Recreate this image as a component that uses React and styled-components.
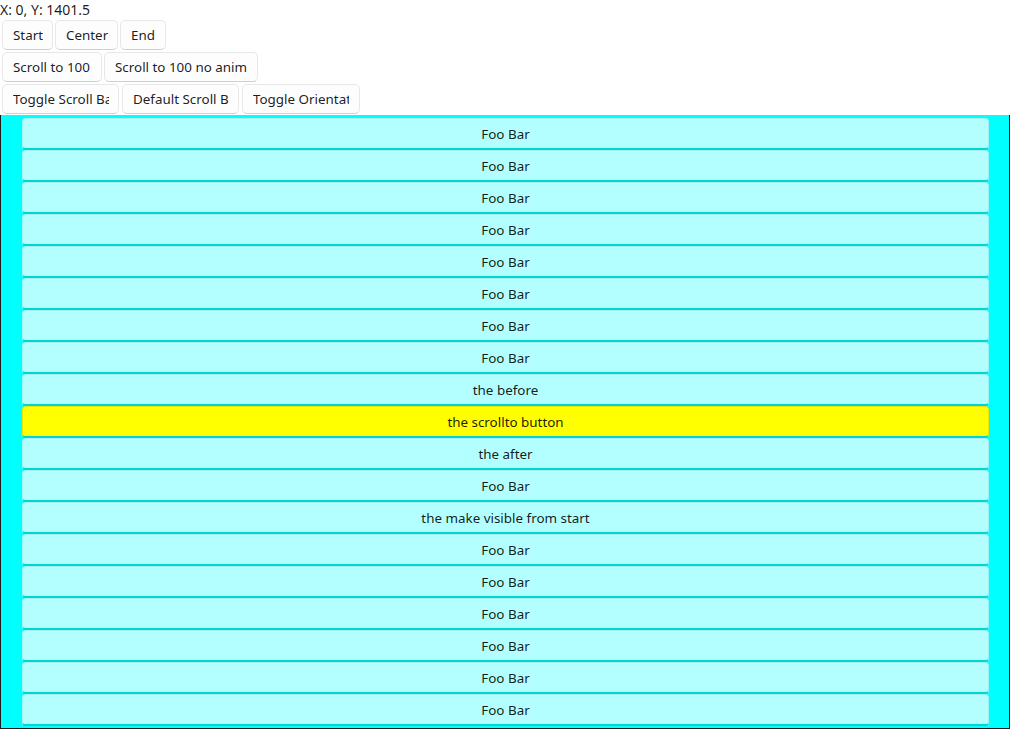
import React from "react";
import styled, { createGlobalStyle } from "styled-components";

const Global = createGlobalStyle`
  html, body { margin: 0; padding: 0; background: #ffffff; overflow: hidden; }
  body { font-family: "Noto Sans", "Segoe UI", sans-serif; font-size: 14px; color: rgba(0,0,0,0.894); }
`;

const Page = styled.div`
  width: 1010px;
  height: 729px;
  display: flex;
  flex-direction: column;
  overflow: hidden;
`;

const Coords = styled.div`
  height: 18px;
  line-height: 18px;
  padding-top: 1px;
  font-size: 14px;
  white-space: nowrap;
`;

const Toolbar = styled.div`
  display: flex;
  flex-direction: column;
  gap: 2px;
  padding: 1px 0 0 2px;
`;

const ButtonRow = styled.div`
  display: flex;
  gap: ${(p) => p.$gap || 2}px;
`;

const Button = styled.button`
  box-sizing: border-box;
  width: ${(p) => p.$w}px;
  height: 30px;
  padding: 0 0 1px 10px;
  display: flex;
  align-items: center;
  font-family: inherit;
  font-size: 13.4px;
  color: rgba(0,0,0,0.894);
  background: #fdfdfd;
  border: 1px solid #e8e8e8;
  border-bottom-color: #d0d0d0;
  border-radius: 5px;
  overflow: hidden;
`;

const Label = styled.span`
  display: block;
  white-space: nowrap;
  overflow: hidden;
  max-width: ${(p) => (p.$max ? `${p.$max}px` : "none")};
`;

const Panel = styled.div`
  flex: 1;
  margin-top: 1px;
  background: #00ffff;
  border: 1px solid #1c1c1c;
  border-top: none;
  padding: 3px 20px 0 21px;
  display: flex;
  flex-direction: column;
  overflow: hidden;
`;

const Item = styled.div`
  box-sizing: border-box;
  flex: 0 0 32px;
  height: 32px;
  display: flex;
  align-items: center;
  justify-content: center;
  background: ${(p) => (p.$hl ? "#ffff00" : "#b3ffff")};
  border: 1px solid ${(p) => (p.$hl ? "#e8e800" : "#a3f0f0")};
  border-bottom: 2px solid #00d4d4;
  border-radius: 4px;
  font-size: 13.4px;
  color: rgba(0,0,0,0.894);
`;

const items = [
  ...Array(8).fill("Foo Bar"),
  "the before",
  "the scrollto button",
  "the after",
  "Foo Bar",
  "the make visible from start",
  ...Array(6).fill("Foo Bar"),
];

export default function App() {
  return (
    <Page>
      <Global />
      <Coords>X: 0, Y: 1401.5</Coords>
      <Toolbar>
        <ButtonRow>
          <Button $w={51}><Label>Start</Label></Button>
          <Button $w={63}><Label>Center</Label></Button>
          <Button $w={46}><Label>End</Label></Button>
        </ButtonRow>
        <ButtonRow>
          <Button $w={100}><Label>Scroll to 100</Label></Button>
          <Button $w={154}><Label>Scroll to 100 no anim</Label></Button>
        </ButtonRow>
        <ButtonRow $gap={3}>
          <Button $w={117}><Label $max={96}>Toggle Scroll Bar</Label></Button>
          <Button $w={117}><Label $max={96}>Default Scroll Bar</Label></Button>
          <Button $w={118}><Label $max={96}>Toggle Orientation</Label></Button>
        </ButtonRow>
      </Toolbar>
      <Panel>
        {items.map((t, i) => (
          <Item key={i} $hl={t === "the scrollto button"}>
            {t}
          </Item>
        ))}
      </Panel>
    </Page>
  );
}
